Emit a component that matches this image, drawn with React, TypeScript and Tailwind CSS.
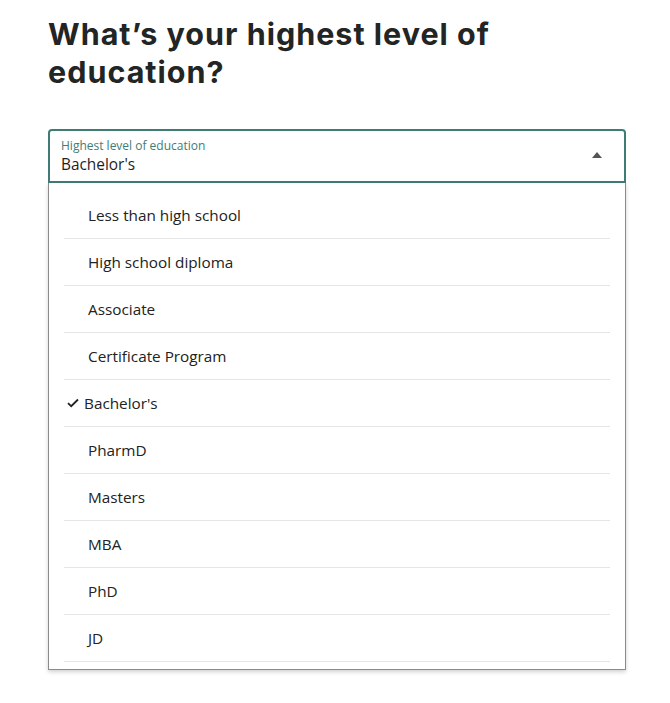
import React from "react";

const options = [
  "Less than high school",
  "High school diploma",
  "Associate",
  "Certificate Program",
  "Bachelor's",
  "PharmD",
  "Masters",
  "MBA",
  "PhD",
  "JD",
];

export default function App() {
  return (
    <div
      className="min-h-[703px] w-[670px] bg-white pl-[48px] pr-[44px] pt-[15px]"
      style={{ fontFamily: '"Open Sans", "Liberation Sans", sans-serif' }}
    >
      <h1
        className="text-[30.5px] font-bold leading-[38px] text-[#222524] tracking-[1px]"
        style={{ fontFamily: 'Inter, "Liberation Sans", sans-serif' }}
      >
        What’s your highest level of
        <br />
        education?
      </h1>
      <div className="mt-[38px] w-[578px]">
        <div className="flex h-[54px] items-center justify-between rounded-t-[4px] border-2 border-[#3f7c76] pl-[11px] pr-[22px]">
          <div className="flex flex-col">
            <span className="text-[12px] leading-[16px] text-[#3f7c76]">
              Highest level of education
            </span>
            <span className="mt-[1px] text-[15.4px] leading-[20px] text-[#1f1f1f]">
              Bachelor's
            </span>
          </div>
          <svg width="10" height="6" viewBox="0 0 10 6" className="mb-[2px]">
            <path d="M0 6 L5 0 L10 6 Z" fill="#555" />
          </svg>
        </div>
        <div className="border border-t-0 border-[#8a8a8a] bg-white px-[15px] pb-[7px] pt-[9px] shadow-[0_2px_4px_rgba(0,0,0,0.18)]">
          {options.map((o) => (
            <div
              key={o}
              className="flex h-[47px] items-center border-b border-[#e6e6e6] text-[15.3px] text-[#222]"
            >
              {o === "Bachelor's" ? (
                <div className="flex items-center pl-[3px]">
                  <svg width="12" height="10" viewBox="0 0 12 10" className="mr-[5px]">
                    <path
                      d="M1 5.2 L4.2 8.2 L11 1.5"
                      fill="none"
                      stroke="#222"
                      strokeWidth="1.8"
                    />
                  </svg>
                  <span>{o}</span>
                </div>
              ) : (
                <span className="pl-[24px]">{o}</span>
              )}
            </div>
          ))}
        </div>
      </div>
    </div>
  );
}
